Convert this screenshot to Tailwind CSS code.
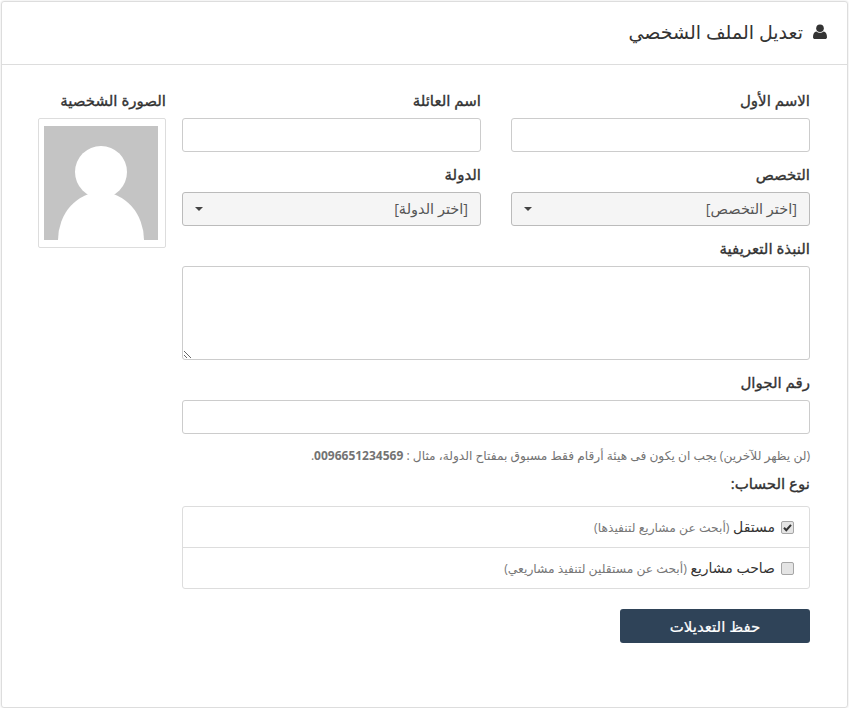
<!DOCTYPE html>
<html lang="ar" dir="rtl">
<head>
  <meta charset="UTF-8">
  <title>تعديل الملف الشخصي</title>
  <script src="https://cdn.jsdelivr.net/npm/@tailwindcss/browser@4"></script>
</head>
<body class="bg-white text-[#333] text-[14px] font-['Open_Sans','DejaVu_Sans',sans-serif]">
  <div class="mx-px mt-px w-[847px] h-[707px] border border-[#ddd] rounded-[3px] shadow-[0_0_2px_rgba(0,0,0,0.15)]">
    <div class="h-[63px] border-b border-[#ddd] flex items-center gap-[10px] pr-[20px] pb-[3px]">
      <svg class="w-[14px] h-[15px] shrink-0" viewBox="0 0 14 15" fill="#333"><circle cx="7" cy="4.2" r="3.8"/><path d="M0 13.2C0 9.8 1.2 7.6 3.4 7.4 4.4 8.3 5.6 8.8 7 8.8s2.6-.5 3.6-1.4c2.2.2 3.4 2.4 3.4 5.8 0 1.2-.8 1.8-2 1.8H2c-1.2 0-2-.6-2-1.8z"/></svg>
      <h1 class="text-[19px] leading-[24px] font-normal">تعديل الملف الشخصي</h1>
    </div>

    <form class="flex gap-[16px] pr-[37px] pl-[36px] pt-[26px]">
      <div class="w-[628px]">
        <div class="grid grid-cols-2 gap-x-[30px]">
          <div class="h-[74px]">
            <label class="block text-[15px] [-webkit-text-stroke:0.35px] leading-[18px] mb-[9px]">الاسم الأول</label>
            <input type="text" class="block w-full h-[34px] border border-[#ccc] rounded-[3px] bg-white">
          </div>
          <div class="h-[74px]">
            <label class="block text-[15px] [-webkit-text-stroke:0.35px] leading-[18px] mb-[9px]">اسم العائلة</label>
            <input type="text" class="block w-full h-[34px] border border-[#ccc] rounded-[3px] bg-white">
          </div>
          <div class="h-[74px]">
            <label class="block text-[15px] [-webkit-text-stroke:0.35px] leading-[18px] mb-[9px]">التخصص</label>
            <div class="h-[34px] border border-[#bbb] rounded-[3px] bg-[#f5f5f5] flex items-center justify-between px-[12px] text-[14.5px] text-[#555]">
              <span>[اختر التخصص]</span>
              <span class="w-0 h-0 border-x-[4px] border-x-transparent border-t-[4px] border-t-[#444]"></span>
            </div>
          </div>
          <div class="h-[74px]">
            <label class="block text-[15px] [-webkit-text-stroke:0.35px] leading-[18px] mb-[9px]">الدولة</label>
            <div class="h-[34px] border border-[#bbb] rounded-[3px] bg-[#f5f5f5] flex items-center justify-between px-[12px] text-[14.5px] text-[#555]">
              <span>[اختر الدولة]</span>
              <span class="w-0 h-0 border-x-[4px] border-x-transparent border-t-[4px] border-t-[#444]"></span>
            </div>
          </div>
        </div>

        <label class="block text-[15px] [-webkit-text-stroke:0.35px] leading-[18px] mb-[9px]">النبذة التعريفية</label>
        <textarea class="block w-full h-[94px] border border-[#ccc] rounded-[3px] bg-white"></textarea>

        <label class="block text-[15px] [-webkit-text-stroke:0.35px] leading-[18px] mt-[13px] mb-[9px]">رقم الجوال</label>
        <input type="tel" class="block w-full h-[34px] border border-[#ccc] rounded-[3px] bg-white">

        <p class="text-[12.2px] leading-[17px] text-[#737373] mt-[13px]">(لن يظهر للآخرين) يجب ان يكون فى هيئة أرقام فقط مسبوق بمفتاح الدولة، مثال : <b class="font-bold text-[12px]">0096651234569</b>.</p>

        <label class="block text-[15px] [-webkit-text-stroke:0.35px] leading-[18px] mt-[10px] mb-[14px]">نوع الحساب:</label>
        <div class="border border-[#ddd] rounded-[3px]">
          <label class="h-[41px] flex items-center gap-[6px] pr-[15px] border-b border-[#ddd]">
            <span class="relative w-[13px] h-[13px] shrink-0">
              <input type="checkbox" checked class="block appearance-none w-[13px] h-[13px] border border-[#a6a6a6] rounded-[2px] bg-[#e4e4e4]">
              <svg class="absolute inset-0 w-[13px] h-[13px]" viewBox="0 0 13 13" fill="none" stroke="#333" stroke-width="2"><path d="M3 6.8l2.3 2.4L10 3.8"/></svg>
            </span>
            <span>مستقل <small class="text-[12.3px] text-[#777]">(أبحث عن مشاريع لتنفيذها)</small></span>
          </label>
          <label class="h-[40px] flex items-center gap-[6px] pr-[15px]">
            <input type="checkbox" class="block appearance-none shrink-0 w-[13px] h-[13px] border border-[#a6a6a6] rounded-[2px] bg-[#e4e4e4]">
            <span>صاحب مشاريع <small class="text-[12.3px] text-[#777]">(أبحث عن مستقلين لتنفيذ مشاريعي)</small></span>
          </label>
        </div>

        <button type="button" class="block w-[190px] h-[34px] mt-[20px] bg-[#2f4358] text-white text-[15px] rounded-[3px] [-webkit-text-stroke:0.2px]">حفظ التعديلات</button>
      </div>

      <div class="w-[128px]">
        <label class="block text-[15px] [-webkit-text-stroke:0.35px] leading-[18px] mb-[9px]">الصورة الشخصية</label>
        <div class="border border-[#ddd] rounded-[2px] pl-[5px] pr-[7px] py-[7px]">
          <svg class="block w-[114px] h-[114px]" viewBox="0 0 114 114"><rect width="114" height="114" fill="#c4c4c4"/><circle cx="57" cy="46" r="26" fill="#fff"/><ellipse cx="57" cy="114" rx="43" ry="48" fill="#fff"/></svg>
        </div>
      </div>
    </form>
  </div>
</body>
</html>
